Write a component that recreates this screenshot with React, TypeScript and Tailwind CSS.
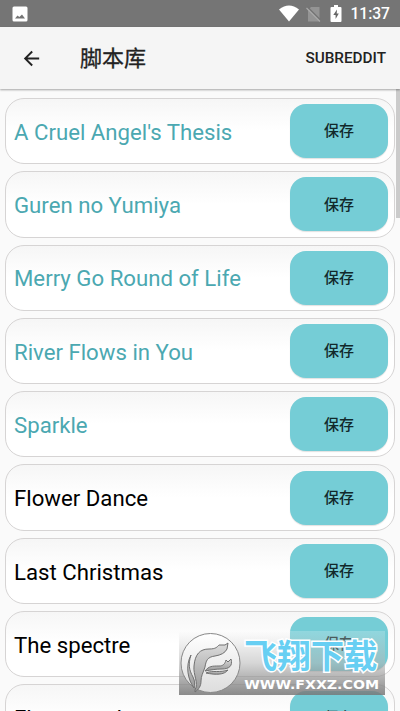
import React from 'react';
import { MdArrowBack } from 'react-icons/md';

interface Script {
  title: string;
  highlighted: boolean;
}

const scripts: Script[] = [
  { title: "A Cruel Angel's Thesis", highlighted: true },
  { title: 'Guren no Yumiya', highlighted: true },
  { title: 'Merry Go Round of Life', highlighted: true },
  { title: 'River Flows in You', highlighted: true },
  { title: 'Sparkle', highlighted: true },
  { title: 'Flower Dance', highlighted: false },
  { title: 'Last Christmas', highlighted: false },
  { title: 'The spectre', highlighted: false },
  { title: 'Fly me to the moon', highlighted: false },
];

const StatusBar: React.FC = () => (
  <div className="flex h-[27px] shrink-0 items-center bg-[#757575] pl-[12px] pr-[10px] text-white">
    <svg className="h-4 w-4" viewBox="0 0 16 16">
      <rect x="0.5" y="0.5" width="15" height="15" rx="1.5" fill="#fff" />
      <path d="M3 12.5 L5.5 9.5 L7.3 11 L10 8.5 L13 12.5 Z" fill="#757575" />
    </svg>
    <div className="ml-auto flex items-center">
      <svg className="h-[17px] w-[20px]" viewBox="0 0 20 17">
        <path d="M0 4.5 Q10 -3.5 20 4.5 L10 16.5 Z" fill="#fff" />
      </svg>
      <svg className="ml-[7px] h-4 w-[15px]" viewBox="0 0 15 16">
        <path d="M5 1 H13.5 V15.5 H2 V4 Z" fill="#949494" />
        <path d="M1.2 0.8 L15 14.6" stroke="#757575" strokeWidth="1.5" />
        <path d="M0.5 2 L14 15.5" stroke="#a8a8a8" strokeWidth="1.3" />
      </svg>
      <svg className="ml-[9px] h-[17px] w-[12px]" viewBox="0 0 12 17">
        <path d="M4 0 H8 V2 H10.5 Q11.5 2 11.5 3 V16 Q11.5 17 10.5 17 H1.5 Q0.5 17 0.5 16 V3 Q0.5 2 1.5 2 H4 Z" fill="#fff" />
        <path d="M7 4.5 L3.3 10 H5.6 V14 L8.8 8.5 H6.7 Z" fill="#666" />
      </svg>
      <span className="mt-[2px] ml-[8px] text-[15.6px] leading-none font-medium">11:37</span>
    </div>
  </div>
);

const AppBar: React.FC = () => (
  <header className="z-10 flex h-[62px] shrink-0 items-center bg-[#f5f5f5] pl-[20px] pr-[14px] shadow-[0_1px_2px_rgba(0,0,0,0.35)]">
    <MdArrowBack className="h-[23px] w-[23px] text-[#222]" />
    <h1 className="mt-px ml-[37px] text-[22px] leading-none text-[#222] [-webkit-text-stroke:0.3px_#222]">脚本库</h1>
    <button className="mt-[2px] ml-auto text-[15.3px] leading-none font-medium text-[#222]">SUBREDDIT</button>
  </header>
);

const ScriptRow: React.FC<{ script: Script }> = ({ script }) => (
  <li className="flex h-[66.3px] shrink-0 items-center justify-between rounded-[19px] border-[1.5px] border-[#d6d4d4] bg-linear-to-b from-[#f6f6f6] to-white to-50% pl-[8px] pr-[6px]">
    <span className={`pt-[1.5px] text-[22.2px] leading-none ${script.highlighted ? 'text-[#4ba8b1]' : 'text-black'}`}>
      {script.title}
    </span>
    <button className="h-[54px] w-[98px] rounded-[16px] bg-[#75cdd6] pt-[1px] text-[15px] font-medium text-[#12292b] shadow-[0_1px_1px_rgba(0,0,0,0.12)]">
      保存
    </button>
  </li>
);

const Watermark: React.FC = () => (
  <div className="absolute top-[631px] left-[179px] flex h-[64px] w-[206px] bg-linear-to-b from-white/20 via-[#b5b5b5]/55 to-[#777]/85">
    <svg className="mt-[1px] h-[63px] w-[63px] shrink-0" viewBox="0 0 63 63">
      <defs>
        <linearGradient id="disc" x1="0" y1="0" x2="0" y2="1">
          <stop offset="0" stopColor="#fff" />
          <stop offset="1" stopColor="#ddd" />
        </linearGradient>
        <linearGradient id="wing" x1="0" y1="0" x2="0" y2="1">
          <stop offset="0" stopColor="#dcdcdc" />
          <stop offset="1" stopColor="#969696" />
        </linearGradient>
      </defs>
      <circle cx="31.5" cy="31" r="29.5" fill="url(#disc)" stroke="#888" />
      <g fill="url(#wing)" stroke="#707070" strokeWidth="1" strokeLinejoin="round">
        <path d="M16 58 C20 51 14 43 15 34 C16 22 21 17 30 17 C37 17 38 15 40 13 L46 13 L49 11 L48 17 C46 21 42 23 36 24 C28 25 27 29 26 35 C24 41 22 44 22 49 C22 54 20 57 16 60 Z" />
        <path d="M26 39 C30 34 33 34 40 34 C44 34 46 32 47 28 L49 30 L52 27 C54 34 50 37 43 37 C36 37 32 38 26 39 Z" />
        <path d="M27 41 C34 38 41 41 49 38 C45 43 37 43 27 41 Z" />
        <path d="M12 23 C9 32 10 38 14 45 C16 49 16 53 15 56 C9 48 6 34 12 23 Z" />
      </g>
    </svg>
    <div className="flex min-w-0 flex-1 flex-col pt-[9px]">
      <span className="origin-left scale-x-[1.01] pl-[2px] text-[33px] leading-[34px] font-bold whitespace-nowrap text-[#67cff3] [paint-order:stroke_fill] [-webkit-text-stroke:3px_#fff]">飞翔下载</span>
      <span className="mt-[4px] w-max origin-left scale-x-[1.09] pl-[2px] font-['DejaVu_Sans'] text-[13px] leading-[14px] font-bold whitespace-nowrap text-white">WWW.FXXZ.COM</span>
    </div>
  </div>
);

const App: React.FC = () => (
  <div className="relative flex h-[711px] w-[400px] flex-col overflow-hidden bg-[#fafafa] font-['Roboto','Noto_Sans_CJK_SC',sans-serif]">
    <StatusBar />
    <AppBar />
    <div className="flex min-h-0 flex-1 overflow-hidden">
      <ul className="flex w-[396px] flex-col gap-[7px] pt-[9px] pr-[1px] pl-[5px]">
        {scripts.map((script) => (
          <ScriptRow key={script.title} script={script} />
        ))}
      </ul>
      <div className="h-[129px] w-[4px] bg-[#cbcbcb]" />
    </div>
    <Watermark />
  </div>
);

export default App;
